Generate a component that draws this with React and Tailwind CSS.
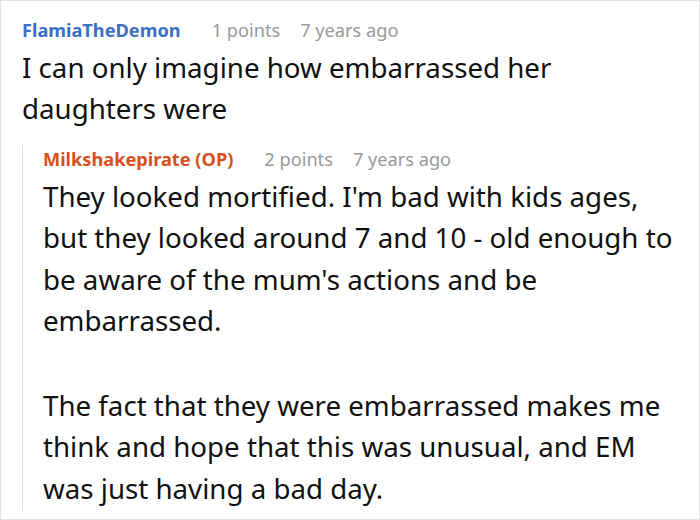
import React from 'react'

const comment = {
  user: 'FlamiaTheDemon',
  points: 1,
  time: '7 years ago',
  text: ['I can only imagine how embarrassed her daughters were'],
}

const reply = {
  user: 'Milkshakepirate (OP)',
  points: 2,
  time: '7 years ago',
  text: [
    "They looked mortified. I'm bad with kids ages, but they looked around 7 and 10 - old enough to be aware of the mum's actions and be embarrassed.",
    'The fact that they were embarrassed makes me think and hope that this was unusual, and EM was just having a bad day.',
  ],
}

function Meta({ user, points, time, nameClass }) {
  return (
    <div className="flex items-baseline text-[18.2px] leading-[27px] whitespace-nowrap">
      <span className={`font-bold ${nameClass}`}>{user}</span>
      <span className="ml-[31px] text-[#999]">{points} points</span>
      <span className="ml-[20px] text-[#999]">{time}</span>
    </div>
  )
}

export default function App() {
  return (
    <div
      className="w-[700px] h-[520px] overflow-hidden bg-white border border-[#e2e2e2] pl-[21px] pr-3 pt-[15.5px] text-[#111]"
      style={{ fontFamily: '"Noto Sans", "Open Sans", sans-serif' }}
    >
      {/* top-level comment */}
      <Meta {...comment} nameClass="text-[#3b6fc2]" />
      <div className="mt-[3px] text-[27.7px] leading-[41.5px]">
        {comment.text.map((p, i) => <p key={i}>{p}</p>)}
      </div>

      {/* reply */}
      <div className="mt-[27.5px] border-l border-[#dedede] pl-5">
        <div className="-mt-[11.5px]">
          <Meta {...reply} nameClass="text-[#d64f1e]" />
        </div>
        <div className="mt-[3px] -mb-[6px] text-[27.7px] leading-[41.6px] space-y-[43px]">
          {reply.text.map((p, i) => <p key={i}>{p}</p>)}
        </div>
      </div>
    </div>
  )
}
